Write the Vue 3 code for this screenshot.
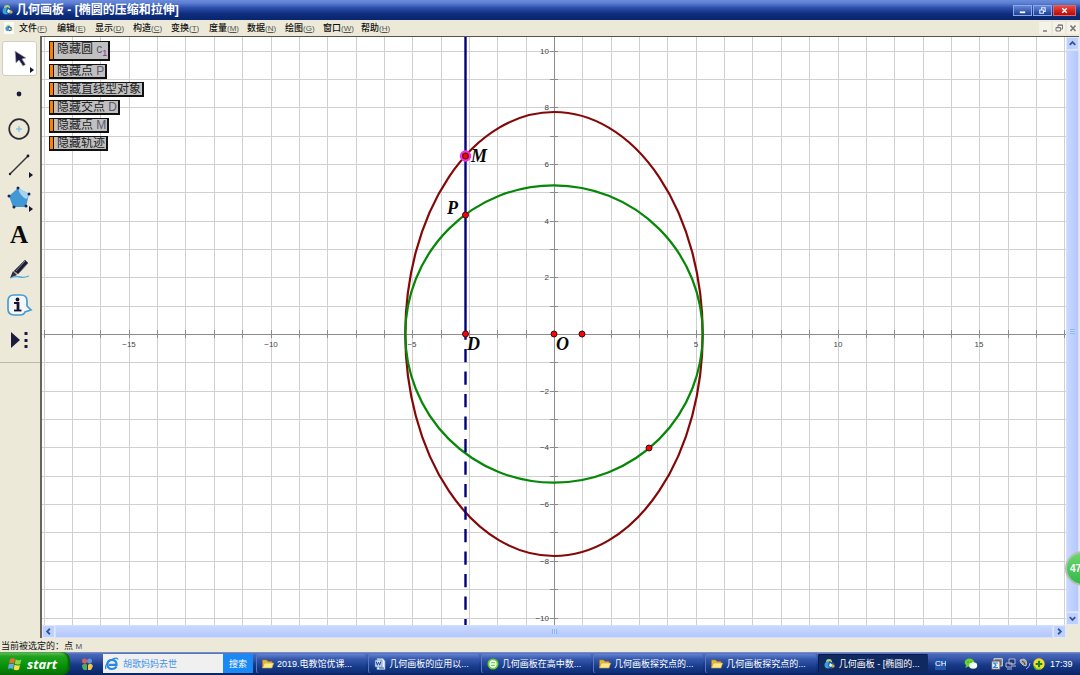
<script setup>
const menus = [
  ['文件', 'F'], ['编辑', 'E'], ['显示', 'D'], ['构造', 'C'], ['变换', 'T'],
  ['度量', 'M'], ['数据', 'N'], ['绘图', 'G'], ['窗口', 'W'], ['帮助', 'H'],
]
const actions = [
  { text: '隐藏圆', name: 'c', sub: '1' },
  { text: '隐藏点', name: 'P' },
  { text: '隐藏直线型对象' },
  { text: '隐藏交点', name: 'D' },
  { text: '隐藏点', name: 'M' },
  { text: '隐藏轨迹' },
]
const tasks = [
  { icon: 'folder', text: '2019.电教馆优课...' },
  { icon: 'word', text: '几何画板的应用以...' },
  { icon: 'browser', text: '几何画板在高中数...' },
  { icon: 'folder', text: '几何画板探究点的...' },
  { icon: 'folder', text: '几何画板探究点的...' },
  { icon: 'sketchpad', text: '几何画板 - [椭圆的...', active: true },
]
const tools = ['选择', '点', '圆', '线段', '多边形', '文字', '标记', '信息', '自定义']

const UNIT = 28.35
const OX = 554
const OY = 334
const px = (x) => Math.round(OX + x * UNIT)
const py = (y) => Math.round(OY - y * UNIT)
const range = (a, b) => Array.from({ length: b - a + 1 }, (_, i) => a + i)
const cols = range(-18, 18)
const rows = range(-10, 10)
const xLabels = [-15, -10, -5, 5, 10, 15]
const yLabels = [10, 8, 6, 4, 2, -2, -4, -6, -8, -10]
const label = (n) => String(n).replace('-', '−')
</script>

<template>
  <div class="window">
    <svg class="defs" aria-hidden="true">
      <defs>
        <symbol id="sketchpad" viewBox="0 0 12 12">
          <circle cx="5" cy="4" r="3" fill="#b8d36a" /><circle cx="4" cy="7" r="3.5" fill="#3ba0d8" />
          <path d="M5 3 10 5 11 9 7 11 4 8Z" fill="#1d5da8" /><path d="M6 5 9 7 7 9 5 8Z" fill="#f2f4ea" />
          <circle cx="9" cy="8" r="1.5" fill="#e0a83c" />
        </symbol>
        <symbol id="folder" viewBox="0 0 12 12">
          <path d="M.5 10V2H4.5L6 3.5H10V5" fill="#e8b93c" stroke="#a87912" stroke-width=".6" />
          <path d="M.5 10 2.5 5H11.7L10 10Z" fill="#ffe88c" stroke="#c59a2a" stroke-width=".6" />
        </symbol>
        <symbol id="word" viewBox="0 0 12 12">
          <path d="M3 .5H9L11 3V11.5H3Z" fill="#edf3ff" stroke="#7f9fd4" stroke-width=".7" />
          <path d="M1 2H8V9H1Z" fill="#d6e4fb" stroke="#426bb0" stroke-width=".6" />
          <path d="M2.2 3.5 3.3 7.3 4.5 4 5.7 7.3 6.8 3.5M5 10H10" fill="none" stroke="#234a94" />
        </symbol>
        <symbol id="browser" viewBox="0 0 12 12">
          <circle cx="6" cy="6" r="5.5" fill="#65cf32" /><circle cx="6" cy="6" r="3" fill="none" stroke="#fff" stroke-width="1.3" />
          <path d="M3 6H9" stroke="#fff" stroke-width="1.3" />
        </symbol>
      </defs>
    </svg>

    <header class="title">
      <svg class="icon12"><use href="#sketchpad" /></svg>
      <h1>几何画板 - [椭圆的压缩和拉伸]</h1>
      <div class="caption">
        <button aria-label="最小化"><svg viewBox="0 0 18 10"><path d="M6 7H12" stroke="#fff" stroke-width="2" /></svg></button>
        <button aria-label="还原"><svg viewBox="0 0 18 10"><path d="M8 4V2H12V6H10M6 4.5H10V8H6Z" fill="none" stroke="#e3ebff" stroke-width="1.2" /></svg></button>
        <button class="close" aria-label="关闭"><svg viewBox="0 0 22 10"><path d="M8.5 2.5 13.5 7.5M13.5 2.5 8.5 7.5" stroke="#fff" stroke-width="1.6" /></svg></button>
      </div>
    </header>

    <nav class="menu">
      <span class="doc"><svg class="icon8"><use href="#sketchpad" /></svg></span>
      <button v-for="m in menus" :key="m[1]" class="item">{{ m[0] }}<span class="key">(<u>{{ m[1] }}</u>)</span></button>
      <div class="mdi">
        <button aria-label="最小化文档"><svg viewBox="0 0 12 12"><path d="M4 9H8" stroke="#777" stroke-width="1.5" /></svg></button>
        <button aria-label="还原文档"><svg viewBox="0 0 12 12"><path d="M5 5V3H9.5V7H8M3 5.5H7.5V9H3ZM5 3.2H9.5M3 5.7H7.5" fill="none" stroke="#777" /></svg></button>
        <button aria-label="关闭文档"><svg viewBox="0 0 12 12"><path d="M3.5 3.5 8.5 9M8.5 3.5 3.5 9" stroke="#777" stroke-width="1.6" /></svg></button>
      </div>
    </nav>

    <main class="work">
      <aside class="tools">
        <button v-for="(t, i) in tools" :key="t" class="tool" :class="{ chosen: i === 0 }" :aria-label="t">
          <svg viewBox="0 0 34 34">
            <g v-if="i === 0">
              <path d="M12 9 13 21 16 18 20 24 22.500 22.500 19 17 23 16Z" fill="#1b1b40" stroke="#aaaac0" stroke-width=".7" />
              <path d="M27 25V31L31 28Z" fill="#15152e" />
            </g>
            <circle v-else-if="i === 1" cx="17" cy="17" r="2.400" fill="#1b1b40" />
            <g v-else-if="i === 2" fill="none">
              <circle cx="17" cy="17" r="9.800" stroke="#2b2b35" stroke-width="1.700" />
              <path d="M14 17H20M17 14V20" stroke="#67b5e8" />
            </g>
            <g v-else-if="i === 3">
              <path d="M8 27 26 9" stroke="#33333b" stroke-width="1.400" />
              <circle cx="8" cy="27" r="1.200" fill="#222" /><circle cx="26" cy="9" r="1.400" fill="#15152e" />
              <path d="M27 25V31L31 28Z" fill="#15152e" />
            </g>
            <g v-else-if="i === 4">
              <path d="M16 6 27 12 24 25H11L7 14Z" fill="#4298d5" />
              <path d="M16 6 27 12 25 17Q18 15 16 6Z" fill="#a5d3f2" />
              <g fill="#1b2758"><circle cx="16" cy="6" r="1.500" /><circle cx="27" cy="12" r="1.500" /><circle cx="24" cy="24" r="1.500" /><circle cx="12" cy="25" r="1.500" /><circle cx="7" cy="14" r="1.500" /></g>
              <path d="M27 24V30L31 27Z" fill="#15152e" />
            </g>
            <text v-else-if="i === 5" x="17" y="26" class="letter">A</text>
            <g v-else-if="i === 6">
              <path d="M23 8 26 11 16 22 12 19Z" fill="#1b1b35" stroke="#555" stroke-width=".7" />
              <path d="M11 19 15 23 8 26Z" fill="#30303c" /><path d="M14 19 23 9" stroke="#85859a" />
              <path d="M8 26Q14 24 18 25T27 24" fill="none" stroke="#50a8df" stroke-width="1.300" />
            </g>
            <g v-else-if="i === 7">
              <path d="M12 8H19Q25 8 25 14V19L29 23 23 25Q22 28 18 28H12Q6 28 6 22V14Q6 8 12 8Z" fill="#f4f8f8" stroke="#459bd2" stroke-width="1.700" />
              <circle cx="15.500" cy="12.500" r="1.900" fill="#15152e" /><path d="M12 16H16V23" fill="none" stroke="#15152e" stroke-width="2" /><path d="M12 23.500H19.500" stroke="#15152e" stroke-width="1.800" /><path d="M16 15V24" stroke="#15152e" stroke-width="2.800" />
            </g>
            <g v-else fill="#1b1b40">
              <path d="M9 10V26L18 18Z" /><path d="M22.500 10H25.500V13H22.500ZM22.500 17H25.500V20H22.500ZM22.500 23H25.500V26H22.500Z" />
            </g>
          </svg>
        </button>
      </aside>

      <section class="pane">
        <div class="canvas">
          <svg class="plot" viewBox="42 37 1024 588" preserveAspectRatio="xMidYMid slice" role="img" aria-label="椭圆的压缩和拉伸">
            <g stroke="#d0d0d0" shape-rendering="crispEdges">
              <path v-for="c in cols" :key="c" :d="`M${px(c)} 37V625`" />
              <path v-for="r in rows" :key="r" :d="`M42 ${py(r)}H1066`" />
            </g>
            <g stroke="#8c8c8c" shape-rendering="crispEdges">
              <path d="M44 334H1066M554 37V625" />
              <path v-for="c in cols" :key="c" :d="`M${px(c)} 330V338`" />
              <path v-for="r in rows" :key="r" :d="`M550 ${py(r)}H558`" />
            </g>
            <g class="axis">
              <text v-for="n in xLabels" :key="n" :x="px(n)" y="347" text-anchor="middle">{{ label(n) }}</text>
              <text v-for="n in yLabels" :key="n" x="549" :y="py(n) + 3" text-anchor="end">{{ label(n) }}</text>
            </g>
            <ellipse cx="554" cy="334" rx="148.700" ry="222" fill="none" stroke="#850808" stroke-width="2.200" />
            <circle cx="554" cy="334" r="148.700" fill="none" stroke="#078707" stroke-width="2.200" />
            <path d="M465.500 37V334" stroke="#00007c" stroke-width="2.400" />
            <path d="M465.500 334V625" stroke="#00007c" stroke-width="2.400" stroke-dasharray="13.300 9.200" stroke-dashoffset="7.500" />
            <circle cx="465.500" cy="156" r="4.600" fill="#e00000" stroke="#f030e8" stroke-width="2.200" />
            <g fill="#ee0808" stroke="#4a0808">
              <circle cx="465.500" cy="156" r="2.800" /><circle cx="465.500" cy="215" r="3" />
              <circle cx="465.500" cy="334" r="3" /><circle cx="554" cy="334" r="3" />
              <circle cx="582" cy="334" r="3" /><circle cx="649" cy="448" r="3" />
            </g>
            <g class="point">
              <text x="471" y="162">M</text><text x="447" y="214">P</text>
              <text x="467" y="350">D</text><text x="556" y="350">O</text>
            </g>
          </svg>
          <div class="actions">
            <button v-for="a in actions" :key="a.text + a.name" class="action" :class="{ tall: a.sub }">
              {{ a.text }} <span v-if="a.name" class="name">{{ a.name }}<sub v-if="a.sub">{{ a.sub }}</sub></span>
            </button>
          </div>
        </div>
        <div class="vbar">
          <button aria-label="向上"><svg viewBox="0 0 12 12"><path d="M3 7.500 6 4.500 9 7.500" /></svg></button>
          <div class="thumb"><i></i></div>
          <button aria-label="向下"><svg viewBox="0 0 12 12"><path d="M3 4.500 6 7.500 9 4.500" /></svg></button>
        </div>
        <div class="hbar">
          <button aria-label="向左"><svg viewBox="0 0 12 12"><path d="M7.500 3 4.500 6 7.500 9" /></svg></button>
          <div class="thumb"><i></i></div>
          <button aria-label="向右"><svg viewBox="0 0 12 12"><path d="M4.500 3 7.500 6 4.500 9" /></svg></button>
        </div>
      </section>
    </main>

    <footer class="status">当前被选定的：点 <span>M</span></footer>

    <div class="taskbar">
      <button class="start">
        <svg viewBox="0 0 14 14"><path d="M2 2Q4.500 .5 7 2L6 6.500Q3.500 5 1 6.500Z" fill="#f26a36" /><path d="M7.700 2.300Q10.500 4 13.300 2.500L12.300 7Q9.500 8.300 6.800 6.800Z" fill="#91d64b" /><path d="M.8 7.300Q3.500 6 6 7.300L5 12Q2.500 10.500 0 12Z" fill="#6ba6f5" /><path d="M6.600 7.700Q9.500 9.200 12 8L11 12.500Q8 14 5.600 12.300Z" fill="#ffdc43" /></svg>
        <span>start</span>
      </button>
      <button class="quick" aria-label="快速启动"><svg viewBox="0 0 14 14"><circle cx="4.500" cy="4" r="2.500" fill="#dd6048" /><circle cx="9.500" cy="4" r="2.500" fill="#6493dc" /><path d="M2 8Q6 5 7 8V13H4Q2 12 2 8Z" fill="#57a85a" /><path d="M8 8Q11 5 13 9L11 13H8Z" fill="#f1c748" /></svg></button>
      <form class="search" @submit.prevent>
        <svg viewBox="0 0 14 14"><path d="M11.500 9.500Q10 12 7 12Q2.500 12 2.500 7.300Q2.500 3 7 3Q11.500 3 11.500 7.800H4" fill="none" stroke="#2588e8" stroke-width="2.200" /><path d="M1 12Q-1 8 6 3Q12-.5 13 2.500" fill="none" stroke="#2588e8" stroke-width="1.200" /></svg>
        <input aria-label="搜索内容" value="胡歌妈妈去世" />
        <button>搜索</button>
      </form>
      <div class="tasks">
        <button v-for="(t, i) in tasks" :key="i" class="task" :class="{ active: t.active }">
          <svg class="icon12"><use :href="'#' + t.icon" /></svg><span>{{ t.text }}</span>
        </button>
      </div>
      <div class="lang">CH</div>
      <div class="tray">
        <svg class="chat" viewBox="0 0 14 12"><ellipse cx="5.500" cy="4.500" rx="4.800" ry="4" fill="#65d62e" /><ellipse cx="9.200" cy="7.500" rx="4" ry="3.300" fill="#f5fff0" /><path d="M2 7 1.500 10 5 8Z" fill="#65d62e" /><circle cx="4" cy="4" r=".6" fill="#176018" /><circle cx="7" cy="4" r=".6" fill="#176018" /></svg>
        <svg viewBox="0 0 12 12"><path d="M3 3V.7H11.300V8H9" fill="#777" stroke="#ddd" /><path d="M.7 3H9V11.300H.7Z" fill="#eee" stroke="#555" /><path d="M7 5H2.800L5 7.200 2.800 9.500H7" fill="none" stroke="#2b83d6" stroke-width="1.200" /></svg>
        <svg viewBox="0 0 12 12"><path d="M4 1H10V6H4ZM1 5H7V9H1Z" fill="#26336d" stroke="#aeb9dc" /><path d="M2 11H7M8 8H11" stroke="#aeb9dc" /></svg>
        <svg viewBox="0 0 12 12"><path d="M1 2 5 1Q9 3 7 8L4 7Q1 5 1 2Z" fill="#a7a79f" stroke="#d0d0c8" stroke-width=".8" /><path d="M3 3Q6 4 6 7" fill="none" stroke="#44443e" /><path d="M7 11Q11 9 11 5" fill="none" stroke="#a9b9e3" /></svg>
        <svg viewBox="0 0 12 12"><circle cx="6" cy="6" r="5.700" fill="#f7df25" /><path d="M1 8Q3 13 8 11" fill="none" stroke="#54b828" stroke-width="1.500" /><path d="M2.700 6H9.300M6 2.700V9.300" stroke="#16852f" stroke-width="2.200" /></svg>
        <time>17:39</time>
      </div>
    </div>
    <button class="bubble">47</button>
  </div>
</template>

<style>
body { margin: 0; overflow: hidden; }
</style>

<style scoped>
* { box-sizing: border-box; }
button { margin: 0; padding: 0; border: 0; background: none; font: inherit; color: inherit; }
svg { display: block; }
.window { position: relative; display: flex; flex-direction: column; height: 100vh; overflow: hidden; background: #ece9d8; font: 9px/12px "Liberation Sans", "Noto Sans CJK SC", sans-serif; color: #111; }
.defs { position: absolute; width: 0; height: 0; }
.icon12 { width: 12px; height: 12px; flex: none; }
.icon8 { width: 8px; height: 8px; }
.title { flex: none; height: 20px; display: flex; align-items: center; gap: 2px; padding-left: 2px; background: linear-gradient(#6c8cdc 0, #5d80d2 3px, #2b4caa 8px, #0d2d7d 14px, #08246c); color: #fff; }
.title h1 { margin: 0; font: bold 12px/18px "Liberation Sans", "Noto Sans CJK SC", sans-serif; white-space: nowrap; }
.caption { margin-left: auto; display: flex; gap: 1px; padding: 0 4px 0 0; }
.caption button { width: 19px; height: 11px; border: 1px solid #8ba9e9; background: linear-gradient(#6686d5, #1c3e9b); }
.caption button svg { width: 100%; height: 100%; }
.caption .close { width: 23px; border-color: #d96a6a; background: linear-gradient(#e94a40, #bb0808); }
.menu { flex: none; height: 16px; display: flex; align-items: center; padding-left: 4px; }
.doc { width: 10px; height: 12px; padding: 2px 1px; background: #fbfbf6; margin-right: 5px; }
.item { width: 38px; height: 14px; text-align: left; white-space: nowrap; font-weight: 500; }
.key { font-size: 8px; color: #555; }
.mdi { margin-left: auto; display: flex; gap: 2px; padding-right: 1px; }
.mdi button { width: 12px; height: 12px; background: #f5f3e9; }
.work { flex: 1; min-height: 0; display: flex; }
.tools { width: 40px; flex: none; display: flex; flex-direction: column; align-items: center; align-self: flex-start; padding: 5px 3px 6px 1px; border-bottom: 1px solid #bcb9aa; }
.tool { width: 35px; height: 35px; display: grid; place-items: center; border-radius: 3px; }
.tool svg { width: 34px; height: 34px; }
.chosen { background: #fff; border: 1px solid #d0cec3; }
.letter { font: bold 25px "Liberation Serif", serif; text-anchor: middle; fill: #0a0a0a; }
.pane { flex: 1; min-width: 0; display: grid; grid-template: minmax(0, 1fr) 13px / minmax(0, 1fr) 13px; border-top: 1px solid #55554d; border-left: 2px solid #66665e; margin-right: 1px; }
.canvas { position: relative; background: #fff; overflow: hidden; }
.plot { width: 100%; height: 100%; }
.axis { font: 8px "Liberation Sans", sans-serif; fill: #444; }
.point { font: italic bold 18px "Liberation Serif", serif; fill: #080808; }
.actions { position: absolute; left: 7px; top: 4px; display: flex; flex-direction: column; align-items: flex-start; gap: 3px; }
.action { height: 15px; padding: 0 1px 0 7px; border: 1px solid #111; border-right-width: 2px; border-bottom-width: 2px; background: linear-gradient(90deg, #ff8000 3px, #111 3px 4px, #c0c0c0 4px); font-size: 12px; line-height: 12px; white-space: nowrap; color: #222; }
.action.tall { height: 20px; padding-bottom: 4px; }
.name { color: #5b5870; }
.name sub { font-size: 9px; color: #8a2a9a; line-height: 0; }
.vbar, .hbar { display: flex; background: #c1d2ff; }
.vbar { flex-direction: column; }
.vbar button, .hbar button { flex: none; width: 13px; height: 13px; border: 1px solid #dfe8ff; background: #bed0fc; }
.vbar button svg, .hbar button svg { width: 11px; height: 11px; fill: none; stroke: #31589d; stroke-width: 2; }
.thumb { flex: 1; display: grid; place-items: center; border: 1px solid #d3dfff; }
.vbar .thumb { background: linear-gradient(90deg, #c9d8ff, #b4c8fc); }
.hbar .thumb { background: linear-gradient(#c9d8ff, #b4c8fc); }
.thumb i { width: 5px; height: 5px; background: repeating-linear-gradient(#86b6f5 0 1px, #c9dcff 1px 2px); }
.hbar .thumb i { background: repeating-linear-gradient(90deg, #86b6f5 0 1px, #c9dcff 1px 2px); }
.status { flex: none; height: 14px; line-height: 16px; padding-left: 1px; white-space: nowrap; }
.status span { color: #4c5367; font-size: 8px; }
.taskbar { flex: none; height: 23px; display: flex; align-items: stretch; background: linear-gradient(#8798ca 0, #4b68b9 2px, #3c5bae 6px, #173987 13px, #092466); color: #fff; }
.start { flex: none; width: 70px; display: flex; align-items: center; gap: 5px; padding-left: 8px; border-radius: 0 8px 8px 0; background: linear-gradient(#77c66c, #21a421 4px, #089008 14px, #066f06); box-shadow: inset -2px 0 2px #075d07; }
.start svg { width: 14px; height: 14px; }
.start span { font: italic bold 13px/18px "Open Sans", sans-serif; }
.quick { width: 33px; flex: none; display: grid; place-items: center; }
.quick svg { width: 14px; height: 14px; }
.search { flex: none; width: 150px; display: flex; align-items: center; margin: 2px 3px 2px 0; background: #f0f0f0; }
.search svg { width: 14px; height: 14px; margin: 0 4px 0 2px; flex: none; }
.search input { flex: 1; min-width: 0; padding: 0; border: 0; background: transparent; color: #4294e8; font: 9px/14px "Noto Sans CJK SC", sans-serif; }
.search button { width: 30px; height: 100%; background: #1b89f5; color: #fff; }
.tasks { flex: 1; min-width: 0; display: grid; grid-template-columns: repeat(6, minmax(0, 1fr)); gap: 2px; padding: 2px 0; }
.task { display: flex; align-items: center; gap: 3px; padding-left: 6px; min-width: 0; overflow: hidden; white-space: nowrap; background: linear-gradient(#6382d0, #3658ac 5px, #173b8b 13px, #0e2c72); border-radius: 2px; box-shadow: inset 1px 0 #5a77bd; }
.task.active { background: #102961; box-shadow: inset 1px 1px #071b4e; }
.lang { width: 11px; height: 12px; overflow: hidden; margin: 6px 18px 0 7px; background: #2456aa; font-size: 8px; }
.tray { display: flex; align-items: center; gap: 2px; padding-right: 8px; }
.tray svg { width: 12px; height: 12px; }
.tray .chat { width: 14px; margin-right: 11px; }
.tray time { margin-left: 3px; width: 22px; white-space: nowrap; }
.bubble { position: absolute; right: -20px; bottom: 89px; width: 35px; height: 35px; border: 2px solid #b5c0b5; border-radius: 50%; background: linear-gradient(#6cd76c, #35b84c); color: #fff; font: bold 10px/28px "Liberation Sans", sans-serif; text-align: left; padding-left: 3px; }
</style>
